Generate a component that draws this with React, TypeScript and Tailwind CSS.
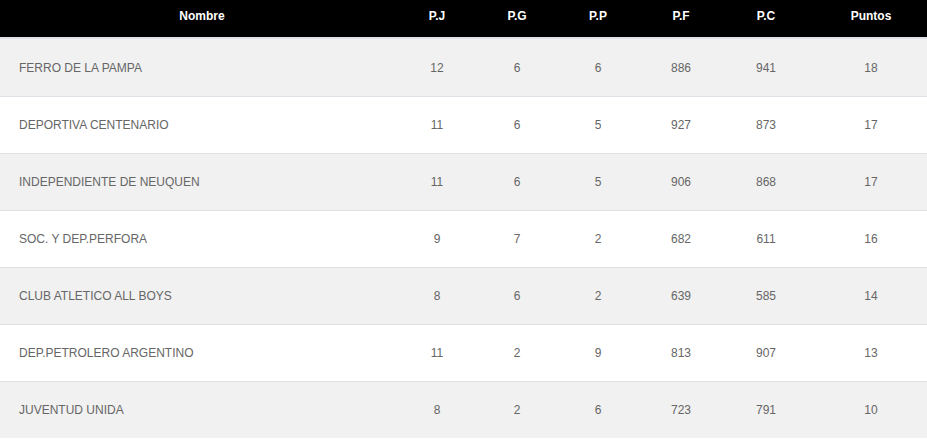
import React from "react";

// tabla de posiciones
const EQUIPOS = [
  { nombre: "FERRO DE LA PAMPA", pj: 12, pg: 6, pp: 6, pf: 886, pc: 941, puntos: 18 },
  { nombre: "DEPORTIVA CENTENARIO", pj: 11, pg: 6, pp: 5, pf: 927, pc: 873, puntos: 17 },
  { nombre: "INDEPENDIENTE DE NEUQUEN", pj: 11, pg: 6, pp: 5, pf: 906, pc: 868, puntos: 17 },
  { nombre: "SOC. Y DEP.PERFORA", pj: 9, pg: 7, pp: 2, pf: 682, pc: 611, puntos: 16 },
  { nombre: "CLUB ATLETICO ALL BOYS", pj: 8, pg: 6, pp: 2, pf: 639, pc: 585, puntos: 14 },
  { nombre: "DEP.PETROLERO ARGENTINO", pj: 11, pg: 2, pp: 9, pf: 813, pc: 907, puntos: 13 },
  { nombre: "JUVENTUD UNIDA", pj: 8, pg: 2, pp: 6, pf: 723, pc: 791, puntos: 10 },
];

const GRID = "grid grid-cols-[404px_66px_94px_68px_98px_72px_1fr]";

export default function App() {
  return (
    <div className="w-[927px] h-[443px] bg-white font-['Liberation_Sans',Arial,sans-serif] text-[12px]">
      <div className={`${GRID} h-[37px] bg-black text-white font-bold items-center pb-[5px]`}>
        <div className="text-center">Nombre</div>
        <div className="text-center">P.J</div>
        <div className="text-center">P.G</div>
        <div className="text-center">P.P</div>
        <div className="text-center">P.F</div>
        <div className="text-center">P.C</div>
        <div className="text-center pl-[13px]">Puntos</div>
      </div>
      <div className="border-t-2 border-[#dee2e6]">
        {EQUIPOS.map((e, i) => (
          <div
            key={e.nombre}
            className={`${GRID} items-center text-[#666] ${
              i === 0 ? "h-[57px]" : "h-[57px] border-t border-[#dee2e6]"
            } ${i % 2 === 0 ? "bg-[#f1f1f1]" : "bg-white"}`}
          >
            <div className="pl-[19px]">{e.nombre}</div>
            <div className="text-center">{e.pj}</div>
            <div className="text-center">{e.pg}</div>
            <div className="text-center">{e.pp}</div>
            <div className="text-center">{e.pf}</div>
            <div className="text-center">{e.pc}</div>
            <div className="text-center pl-[13px]">{e.puntos}</div>
          </div>
        ))}
      </div>
    </div>
  );
}
